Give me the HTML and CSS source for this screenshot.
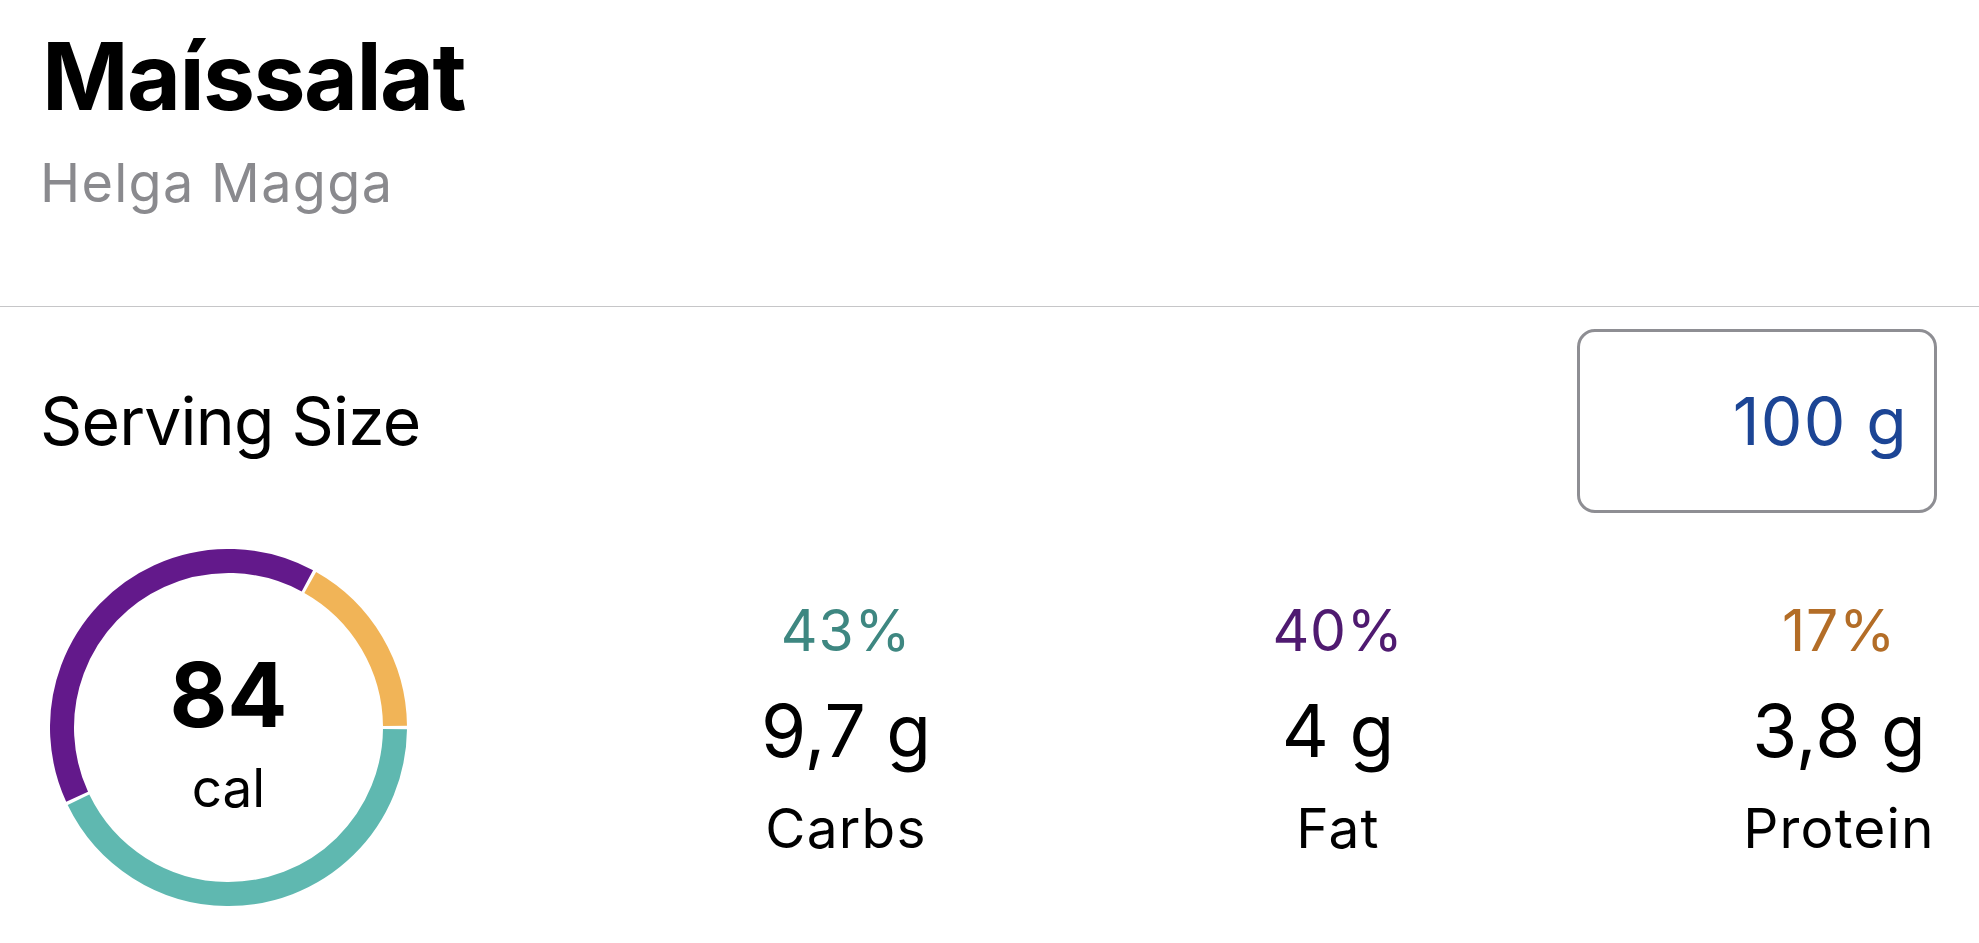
FILE: index.html
```html
<!DOCTYPE html>
<html lang="is">
<head>
<meta charset="utf-8">
<title>Maíssalat</title>
<link rel="stylesheet" href="styles.css">
</head>
<body>
<main class="page">
  <header class="header">
    <h1 class="title">Maíssalat</h1>
    <p class="subtitle">Helga Magga</p>
  </header>
  <section class="serving">
    <span class="serving-label">Serving Size</span>
    <div class="serving-box"><span class="serving-value">100 g</span></div>
  </section>
  <section class="summary">
    <div class="ring">
      <svg class="ring-svg" width="357" height="357" viewBox="0 0 357 357">
        <circle class="seg seg-carbs" cx="178.5" cy="178.5" r="166.5" stroke-dasharray="446.4 2000" transform="rotate(0.6 178.5 178.5)"/>
        <circle class="seg seg-fat" cx="178.5" cy="178.5" r="166.5" stroke-dasharray="415.0 2000" transform="rotate(155.4 178.5 178.5)"/>
        <circle class="seg seg-protein" cx="178.5" cy="178.5" r="166.5" stroke-dasharray="174.4 2000" transform="rotate(299.4 178.5 178.5)"/>
      </svg>
      <div class="ring-text">
        <span class="cal-value">84</span>
        <span class="cal-unit">cal</span>
      </div>
    </div>
    <div class="macros">
      <div class="macro">
        <span class="pct pct-carbs">43%</span>
        <span class="amount">9,7 g</span>
        <span class="label">Carbs</span>
      </div>
      <div class="macro">
        <span class="pct pct-fat">40%</span>
        <span class="amount">4 g</span>
        <span class="label">Fat</span>
      </div>
      <div class="macro">
        <span class="pct pct-protein">17%</span>
        <span class="amount">3,8 g</span>
        <span class="label">Protein</span>
      </div>
    </div>
  </section>
</main>
</body>
</html>
```

FILE: styles.css
```css
* { box-sizing: border-box; }
html, body {
  margin: 0;
  padding: 0;
  background: #ffffff;
}
body {
  font-family: Inter, "Noto Sans", "Liberation Sans", sans-serif;
  color: #000000;
  width: 1979px;
  height: 943px;
  overflow: hidden;
}
.header {
  padding: 20px 42px 91px 40px;
  border-bottom: 1px solid #c6c6c8;
}
.title {
  margin: 0;
  padding-left: 2px;
  font-size: 93px;
  line-height: 112px;
  font-weight: 700;
  letter-spacing: -1.6px;
}
.subtitle {
  margin: 19px 0 0;
  font-size: 54px;
  line-height: 64px;
  letter-spacing: 1.3px;
  color: #8a8a8e;
}
.serving {
  display: flex;
  justify-content: space-between;
  align-items: center;
  padding: 22px 42px 0 40px;
}
.serving-label {
  font-size: 66px;
  line-height: 80px;
  letter-spacing: -0.8px;
}
.serving-box {
  width: 360px;
  height: 184px;
  border: 3px solid #8e8e93;
  border-radius: 18px;
  display: flex;
  align-items: center;
  justify-content: flex-end;
  padding-right: 26px;
}
.serving-value {
  font-size: 66px;
  line-height: 80px;
  letter-spacing: 1.2px;
  color: #1c4595;
}
.summary {
  display: flex;
  align-items: center;
  padding: 36px 42px 0 40px;
}
.ring {
  display: grid;
  margin-left: 10px;
  flex: none;
}
.ring-svg {
  grid-area: 1 / 1;
  display: block;
}
.seg {
  fill: none;
  stroke-width: 24;
}
.seg-carbs { stroke: #5fb8b0; }
.seg-fat { stroke: #63198b; }
.seg-protein { stroke: #f1b457; }
.ring-text {
  grid-area: 1 / 1;
  place-self: center;
  display: flex;
  flex-direction: column;
  align-items: center;
}
.cal-value {
  font-size: 89px;
  line-height: 120px;
  font-weight: 700;
}
.cal-unit {
  font-size: 53px;
  line-height: 66px;
}
.macros {
  flex: 1;
  display: grid;
  grid-template-columns: 178px 220px 196px;
  justify-content: space-between;
  padding-left: 350px;
}
.macro {
  display: flex;
  flex-direction: column;
  align-items: center;
  text-align: center;
  white-space: nowrap;
}
.pct {
  font-size: 57px;
  line-height: 101px;
  letter-spacing: 0.8px;
}
.pct-carbs { color: #3e8781; }
.pct-fat { color: #4f1a70; }
.pct-protein { color: #b36d27; }
.amount {
  font-size: 73px;
  line-height: 100px;
}
.label {
  font-size: 55px;
  line-height: 95px;
  letter-spacing: 1.2px;
}
```
